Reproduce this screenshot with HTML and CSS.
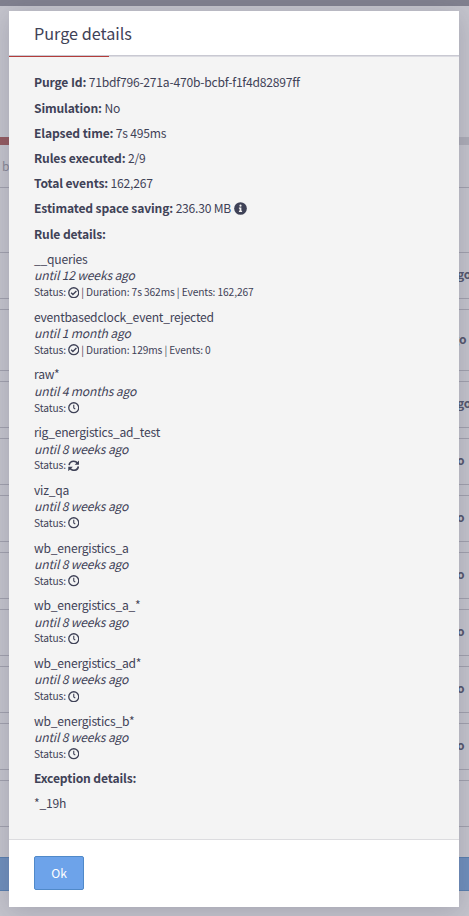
FILE: index.html
```
<!DOCTYPE html>
<html lang="en">
<head>
<meta charset="utf-8">
<title>Purge details</title>
<link rel="stylesheet" href="styles.css">
</head>
<body>
<svg class="defs" width="0" height="0">
  <symbol id="clock" viewBox="0 0 512 512"><circle cx="256" cy="256" r="222" fill="none" stroke="currentColor" stroke-width="58"/><path d="M256 118v146l68 52" fill="none" stroke="currentColor" stroke-width="50"/></symbol>
  <symbol id="check" viewBox="0 0 512 512"><circle cx="256" cy="256" r="222" fill="none" stroke="currentColor" stroke-width="58"/><path d="M140 254l78 78 156-156" fill="none" stroke="currentColor" stroke-width="60"/></symbol>
  <symbol id="sync" viewBox="0 0 512 512"><path d="M50 225C65 125 150 55 256 55c72 0 132 34 170 86M462 287c-15 100-100 170-206 170-72 0-132-34-170-86" fill="none" stroke="currentColor" stroke-width="72"/><path d="M500 12v204H296zM12 500V296h204z" fill="currentColor"/></symbol>
  <symbol id="info" viewBox="0 0 512 512"><circle cx="256" cy="256" r="250" fill="currentColor"/><circle cx="256" cy="146" r="43" fill="#f4f4f4"/><path d="M194 212h96v128h28v52H194v-52h28v-76h-28z" fill="#f4f4f4"/></symbol>
</svg>
<div class="page">
  <div class="topbar"></div>
  <div class="progress"></div>
  <div class="tab">b</div>
  <div class="filters"></div>
  <div class="card first"><b class="wide">go</b></div>
  <div class="card tall"><b>go</b></div>
  <div class="card"><b class="wide">go</b></div>
  <div class="card"><b class="near">go</b></div>
  <div class="card"><b class="near">go</b></div>
  <div class="card"><b class="near">go</b></div>
  <div class="card"><b class="near">go</b></div>
  <div class="card"><b class="near">go</b></div>
  <div class="card"><b class="near">go</b></div>
  <div class="card"></div>
  <div class="action"></div>
</div>
<div class="modal">
  <header><h1>Purge details</h1></header>
  <div class="accent"></div>
  <main>
    <p><b>Purge Id:</b> 71bdf796-271a-470b-bcbf-f1f4d82897ff</p>
    <p><b>Simulation:</b> No</p>
    <p><b>Elapsed time:</b> 7s 495ms</p>
    <p><b>Rules executed:</b> 2/9</p>
    <p><b>Total events:</b> 162,267</p>
    <p><b>Estimated space saving:</b> 236.30 MB <svg class="info"><use href="#info"/></svg></p>
    <p><b>Rule details:</b></p>
    <section><div>__queries</div><em>until 12 weeks ago</em><small>Status: <svg><use href="#check"/></svg> | Duration: 7s 362ms | Events: 162,267</small></section>
    <section><div>eventbasedclock_event_rejected</div><em>until 1 month ago</em><small>Status: <svg><use href="#check"/></svg> | Duration: 129ms | Events: 0</small></section>
    <section><div>raw*</div><em>until 4 months ago</em><small>Status: <svg><use href="#clock"/></svg></small></section>
    <section><div>rig_energistics_ad_test</div><em>until 8 weeks ago</em><small>Status: <svg><use href="#sync"/></svg></small></section>
    <section><div>viz_qa</div><em>until 8 weeks ago</em><small>Status: <svg><use href="#clock"/></svg></small></section>
    <section><div>wb_energistics_a</div><em>until 8 weeks ago</em><small>Status: <svg><use href="#clock"/></svg></small></section>
    <section><div>wb_energistics_a_*</div><em>until 8 weeks ago</em><small>Status: <svg><use href="#clock"/></svg></small></section>
    <section><div>wb_energistics_ad*</div><em>until 8 weeks ago</em><small>Status: <svg><use href="#clock"/></svg></small></section>
    <section><div>wb_energistics_b*</div><em>until 8 weeks ago</em><small>Status: <svg><use href="#clock"/></svg></small></section>
    <p><b>Exception details:</b></p>
    <p>*_19h</p>
  </main>
  <footer><button>Ok</button></footer>
</div>
</body>
</html>
```
FILE: styles.css
```
* { box-sizing: border-box; }
body {
  margin: 0;
  height: 916px;
  overflow: hidden;
  position: relative;
  font-family: "Noto Sans CJK SC", "Noto Sans", sans-serif;
  font-size: 12.1px;
  color: #3f4257;
  background: #c3c3cb;
}
.defs { position: absolute; }
.page { height: 916px; overflow: hidden; background: #c4c4cc; }
.topbar { height: 6px; background: #81818f; }
.progress { height: 8px; margin-top: 131px; background: linear-gradient(90deg, #945b60 50%, #adadb7 50%); }
.tab { height: 42px; padding: 12px 0 0 2px; line-height: 18px; color: #898996; }
.filters { height: 65px; border-top: 1px solid #a1a1ad; }
.card {
  height: 47px;
  margin-bottom: 10px;
  padding-bottom: 4px;
  border: solid #a1a1ad;
  border-width: 1px 0;
  display: flex;
  align-items: center;
  color: #55576d;
}
.card.tall { height: 62px; }
.card b { margin-left: 452px; white-space: nowrap; }
.card b.wide { margin-left: 457px; letter-spacing: -.3px; }
.card b.near { margin-left: 450px; }
.action { height: 34px; margin-top: 30px; background: #6f8fbc; border: solid #597fae; border-width: 1px 0; }
.modal {
  position: absolute;
  left: 9px;
  top: 11px;
  width: 450px;
  height: 896px;
  background: #fff;
  box-shadow: 0 4px 24px rgba(55, 55, 80, .22);
  display: flex;
  flex-direction: column;
}
header { height: 45px; border-bottom: 1px solid #c9c9d2; padding-left: 25px; }
h1 { margin: 0; font-size: 16.2px; line-height: 45px; font-weight: 400; }
.accent { height: 1px; background: linear-gradient(90deg, #b33c3a 100px, #dcdce2 100px); }
main { flex: 1; padding: 17.4px 25px 0; background: #f4f4f4; letter-spacing: -.22px; }
main b { letter-spacing: -.13px; }
main em { letter-spacing: -.17px; }
p { margin: 0 0 8.4px; line-height: 16.8px; white-space: nowrap; }
section { margin-bottom: 8.4px; line-height: 16.45px; white-space: nowrap; position: relative; top: .3px; }
section > * { display: block; height: 16.45px; }
small { font-size: 10.2px; letter-spacing: -.1px; padding-top: .3px; }
small svg { width: 11.5px; height: 11.5px; vertical-align: -2px; margin-left: -.6px; }
.info { width: 13px; height: 13px; vertical-align: -2px; }
footer { height: 68px; border-top: 1px solid #dcdcdf; padding: 16px 25px; }
button {
  display: block;
  width: 50px;
  height: 34px;
  padding: 0 0 2px;
  border: 1px solid #5089c9;
  border-radius: 2px;
  background: #6da3ea;
  color: #fff;
  font: 12.1px "Noto Sans CJK SC", "Noto Sans", sans-serif;
}
```
